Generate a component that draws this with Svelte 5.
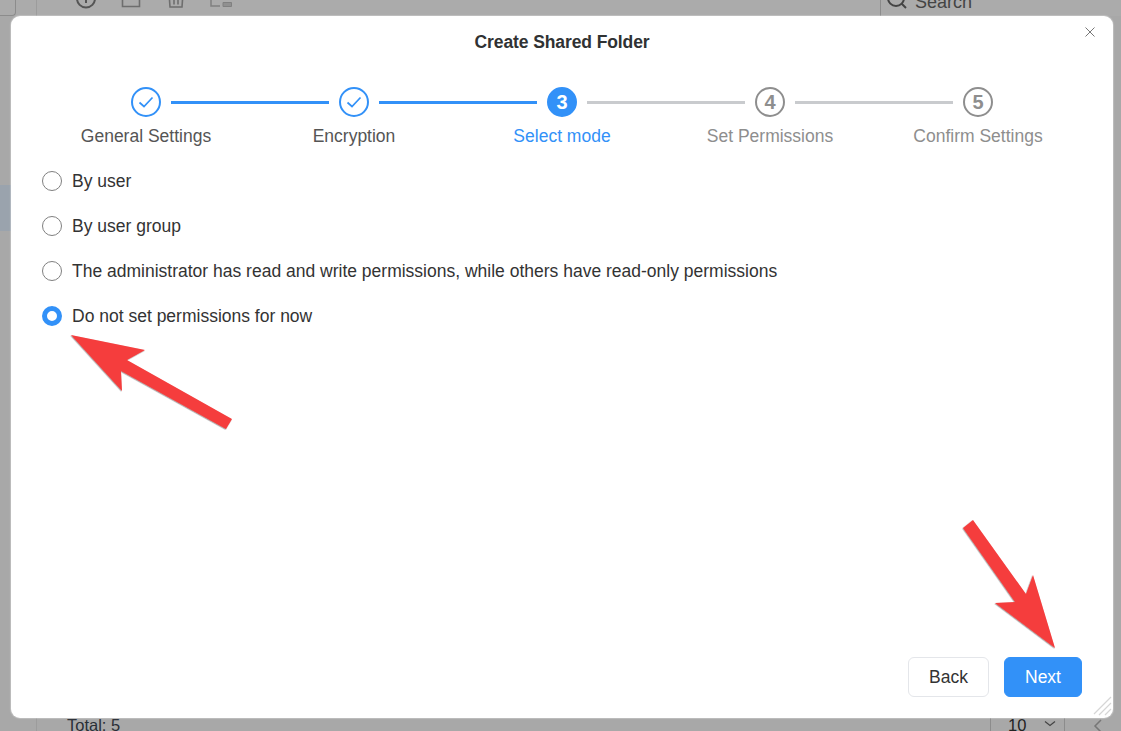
<script>
  const steps = [
    { n: 1, label: 'General Settings', state: 'done' },
    { n: 2, label: 'Encryption', state: 'done' },
    { n: 3, label: 'Select mode', state: 'active' },
    { n: 4, label: 'Set Permissions', state: 'todo' },
    { n: 5, label: 'Confirm Settings', state: 'todo' }
  ];
  const options = [
    'By user',
    'By user group',
    'The administrator has read and write permissions, while others have read-only permissions',
    'Do not set permissions for now'
  ];
  let selected = $state(3);
</script>

<div class="stage">
  <div class="backdrop">
    <div class="top-bar">
      <div class="corner"></div>
      <div class="tools">
        <svg class="tool t1" width="22" height="10" viewBox="0 0 22 10"><circle cx="11" cy="-1.500" r="9" fill="none" stroke="#555" stroke-width="2"/><path d="M11 -3V3" stroke="#555" stroke-width="2"/></svg>
        <svg class="tool t2" width="20" height="8" viewBox="0 0 20 8"><path d="M1.500 0V6.500H18.500V0" fill="none" stroke="#6e6e6e" stroke-width="1.600"/></svg>
        <svg class="tool t3" width="16" height="9" viewBox="0 0 16 9"><path d="M1.500 0L2 7H14L14.500 0M6 0V4.500M10 0V4.500" fill="none" stroke="#6e6e6e" stroke-width="1.600"/></svg>
        <svg class="tool t4" width="23" height="8" viewBox="0 0 23 8"><path d="M1 0V6H10" fill="none" stroke="#808080" stroke-width="1.500"/><path d="M13 2.500H21.500V6.500H13Z" fill="#909090" stroke="#808080" stroke-width="1"/></svg>
      </div>
      <div class="search">
        <svg width="24" height="9" viewBox="0 0 24 9"><circle cx="10" cy="-2" r="8" fill="none" stroke="#444" stroke-width="2"/><path d="M15.500 3.500L20 8" stroke="#444" stroke-width="2"/></svg>
        <span>Search</span>
      </div>
    </div>
    <div class="row-band"></div>
    <div class="bottom-bar">
      <span class="total">Total: 5</span>
      <div class="pager">
        <span class="size">10</span>
        <svg width="14" height="8" viewBox="0 0 14 8"><path d="M2 1.500L7 5.500L12 1.500" fill="none" stroke="#444" stroke-width="1.200"/></svg>
      </div>
      <svg class="prev" width="10" height="14" viewBox="0 0 10 14"><path d="M8 1L2 7L8 13" fill="none" stroke="#777" stroke-width="1.500"/></svg>
    </div>
  </div>

  <div class="modal">
    <button class="close" aria-label="Close">
      <svg width="10" height="10" viewBox="0 0 10 10"><path d="M.5.500L9.500 9.500M9.500.500L.5 9.500" stroke="#777" stroke-width="1"/></svg>
    </button>
    <h1>Create Shared Folder</h1>

    <ol class="stepper">
      {#each steps as step, i}
        <li class="step {step.state}">
          <div class="track">
            <span class="line before" class:hidden={i === 0} class:on={i > 0 && steps[i - 1].state === 'done'}></span>
            <span class="dot">
              {#if step.state === 'done'}
                <svg width="18" height="14" viewBox="0 0 18 14"><path d="M2.500 7.500L7 11.500L15.500 2.500" fill="none" stroke="#3291f8" stroke-width="1.700"/></svg>
              {:else}
                {step.n}
              {/if}
            </span>
            <span class="line after" class:hidden={i === steps.length - 1} class:on={step.state === 'done'}></span>
          </div>
          <span class="label">{step.label}</span>
        </li>
      {/each}
    </ol>

    <div class="options">
      {#each options as option, i}
        <label class="option">
          <input type="radio" name="mode" checked={selected === i} onchange={() => (selected = i)} />
          <span class="radio"></span>
          <span>{option}</span>
        </label>
      {/each}
    </div>

    <div class="footer">
      <button class="btn">Back</button>
      <button class="btn primary">Next</button>
    </div>

    <svg class="grip" width="22" height="22" viewBox="0 0 22 22"><path d="M20 1L3 18M20 7L8 19M20 13L14 19" stroke="#d6d6d6" stroke-width="1.200" fill="none"/></svg>
  </div>

  <svg class="arrows" width="1121" height="731" viewBox="0 0 1121 731">
    <defs>
      <filter id="sh" x="-10%" y="-10%" width="120%" height="120%"><feDropShadow dx="-0.500" dy="0.600" stdDeviation="0.400" flood-color="#000" flood-opacity="0.500"/></filter>
    </defs>
    <path filter="url(#sh)" fill="#f53e3e" d="M71 335L145 350L127 360L232 419L226 429L121 371L122 391Z"/>
    <path filter="url(#sh)" fill="#f53e3e" d="M1055 648L1033 575L1026 594L973 520L963 528L1015 602L995 603Z"/>
  </svg>
</div>

<style>
  :global(body) {
    margin: 0;
    font-family: "Liberation Sans", Arial, sans-serif;
  }
  .stage {
    position: relative;
    width: 1121px;
    height: 731px;
    overflow: hidden;
    box-sizing: border-box;
    padding: 16px 8px 13px 11px;
    background: #a8a8a8;
  }
  .backdrop {
    position: absolute;
    inset: 0;
    color: #222;
  }
  .top-bar {
    height: 16px;
    display: flex;
    background: #ababab;
  }
  .corner {
    width: 16px;
    height: 16px;
    border-right: 1px solid #8c8c8c;
    border-bottom: 1px solid #8c8c8c;
    border-bottom-right-radius: 4px;
    box-sizing: border-box;
  }
  .tools {
    flex: 1;
    margin-left: 20px;
    border-left: 1px solid #9c9c9c;
  }
  .tool {
    position: absolute;
    top: 0;
  }
  .t1 {
    left: 75px;
  }
  .t2 {
    left: 121px;
  }
  .t3 {
    left: 168px;
  }
  .t4 {
    left: 210px;
  }
  .search {
    width: 241px;
    box-sizing: border-box;
    border-left: 1px solid #8c8c8c;
    display: flex;
    align-items: flex-start;
    gap: 5px;
    padding-left: 5px;
    font-size: 18px;
    line-height: 10px;
    color: #444;
    overflow: hidden;
  }
  .search span {
    margin-top: -3px;
  }
  .row-band {
    position: absolute;
    left: 0;
    top: 185px;
    width: 11px;
    height: 46px;
    background: #9aa3ad;
  }
  .bottom-bar {
    position: absolute;
    left: 36px;
    right: 0;
    bottom: 0;
    height: 13px;
    border-left: 1px solid #9c9c9c;
    font-size: 16.500px;
  }
  .total {
    position: absolute;
    left: 30px;
    top: -2px;
    line-height: 18px;
    color: #2a2f36;
  }
  .pager {
    position: absolute;
    left: 953px;
    top: 0;
    width: 75px;
    height: 13px;
    box-sizing: border-box;
    border-left: 1px solid #8c8c8c;
    border-right: 1px solid #8c8c8c;
  }
  .size {
    position: absolute;
    left: 17px;
    top: -2px;
    line-height: 18px;
  }
  .pager svg {
    position: absolute;
    left: 52px;
    top: 2px;
  }
  .prev {
    position: absolute;
    left: 1056px;
    top: 1px;
  }
  .modal {
    position: relative;
    height: 100%;
    box-sizing: border-box;
    background: #fff;
    border-radius: 9px;
    box-shadow: 0 0 1px 1px rgba(255, 255, 255, 0.25);
    padding: 0 31px;
    display: flex;
    flex-direction: column;
  }
  .close {
    position: absolute;
    top: 11px;
    right: 18px;
    padding: 0;
    border: 0;
    background: none;
    display: flex;
  }
  h1 {
    margin: 0;
    padding-top: 16px;
    height: 21px;
    line-height: 20px;
    text-align: center;
    font-size: 17.500px;
    font-weight: 700;
    letter-spacing: -0.100px;
    color: #303233;
  }
  .stepper {
    list-style: none;
    margin: 34px 0 0;
    padding: 0;
    display: grid;
    grid-template-columns: repeat(5, 208px);
  }
  .step {
    display: flex;
    flex-direction: column;
    align-items: center;
  }
  .track {
    width: 100%;
    display: flex;
    align-items: center;
  }
  .line {
    flex: 1;
    height: 3px;
    background: #c9cbce;
    margin: 0 10px;
  }
  .line.before {
    margin-left: 0;
  }
  .line.after {
    margin-right: 0;
  }
  .line.on {
    background: #3291f8;
  }
  .line.hidden {
    visibility: hidden;
  }
  .dot {
    flex: none;
    width: 30px;
    height: 30px;
    box-sizing: border-box;
    border-radius: 50%;
    border: 2px solid #8e8e8e;
    display: flex;
    align-items: center;
    justify-content: center;
    font-size: 20px;
    font-weight: 700;
    color: #8e8e8e;
  }
  .done .dot {
    border-color: #3291f8;
  }
  .active .dot {
    border-color: #3291f8;
    background: #3291f8;
    color: #fff;
  }
  .label {
    margin-top: 9px;
    font-size: 17.500px;
    line-height: 20px;
    color: #8e8e8e;
    white-space: nowrap;
  }
  .done .label {
    color: #555;
  }
  .active .label {
    color: #3291f8;
  }
  .options {
    margin-top: 25px;
    display: flex;
    flex-direction: column;
    gap: 25px;
  }
  .option {
    display: flex;
    align-items: center;
    gap: 10px;
    height: 20px;
    font-size: 17.500px;
    color: #333;
  }
  .option input {
    position: absolute;
    opacity: 0;
    width: 0;
    height: 0;
    margin: 0;
  }
  .radio {
    flex: none;
    width: 20px;
    height: 20px;
    box-sizing: border-box;
    border-radius: 50%;
    border: 1px solid #808080;
  }
  .option input:checked + .radio {
    border: 5.500px solid #3291f8;
  }
  .footer {
    margin-top: auto;
    padding-bottom: 21px;
    display: flex;
    justify-content: flex-end;
    gap: 15px;
  }
  .btn {
    width: 81px;
    height: 40px;
    box-sizing: border-box;
    border: 1px solid #e4e6ea;
    border-radius: 6px;
    background: #fff;
    font: inherit;
    font-size: 17.500px;
    color: #333;
  }
  .btn.primary {
    width: 78px;
    border-color: #3291f8;
    background: #3291f8;
    color: #fff;
  }
  .grip {
    position: absolute;
    right: 0;
    bottom: 0;
  }
  .arrows {
    position: absolute;
    left: 0;
    top: 0;
    pointer-events: none;
  }
</style>
